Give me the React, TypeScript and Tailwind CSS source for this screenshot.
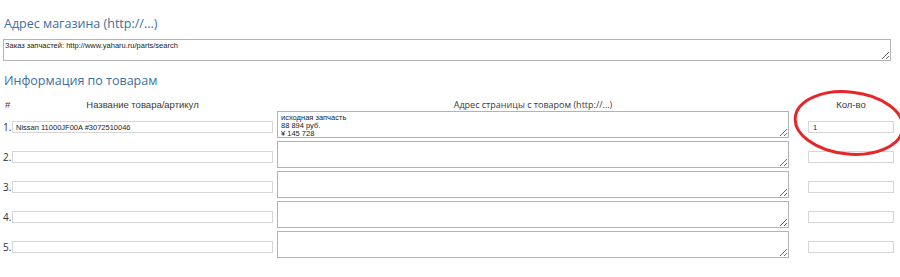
import React from "react";

function Row({ n, name, addr, qty }: { n: number; name?: string; addr?: string; qty?: string }) {
  return (
    <div className="flex items-start h-[27px]">
      <div className="w-[12px] pl-[3px] mt-[10px] h-[12px] leading-[12px] text-[10px] text-[#333] font-['Open_Sans',sans-serif]">
        {n}.
      </div>
      <input
        className="mt-[10px] w-[261px] h-[12px] border border-[#d6d6d6] px-[3px] text-[7.5px] leading-[10px] text-[#222] outline-none font-['Liberation_Sans',Arial,sans-serif]"
        defaultValue={name ?? ""}
      />
      <textarea
        className="ml-[4px] w-[512px] h-[27px] border border-[#b3b3b3] px-[3px] py-[2px] text-[7.5px] leading-[8px] text-[#222] overflow-hidden outline-none font-['Liberation_Sans',Arial,sans-serif]"
        defaultValue={addr ?? ""}
      />
      <input
        className="ml-[19px] mt-[10px] w-[86px] h-[12px] border border-[#d6d6d6] px-[4px] text-[7.5px] leading-[10px] text-[#222] outline-none font-['Liberation_Sans',Arial,sans-serif]"
        defaultValue={qty ?? ""}
      />
    </div>
  );
}

export default function App() {
  return (
    <div className="relative w-[900px] h-[277px] bg-white overflow-hidden">
      <div className="flex flex-col">
        <div className="mt-[16px] pl-[4px] h-[16px] leading-[16px] text-[12.5px] text-[#3d6f9f] font-['Open_Sans',sans-serif]">
          Адрес магазина (http://...)
        </div>
        <textarea
          className="mt-[7px] ml-[3px] w-[888px] h-[22px] border border-[#b3b3b3] pl-[1px] py-[2px] text-[7.5px] leading-[8px] text-[#222] overflow-hidden outline-none font-['Liberation_Sans',Arial,sans-serif]"
          defaultValue="Заказ запчастей: http://www.yaharu.ru/parts/search"
        />
        <div className="mt-[12px] pl-[4px] h-[16px] leading-[16px] text-[12.5px] text-[#3d6f9f] font-['Open_Sans',sans-serif]">
          Информация по товарам
        </div>
        <div className="mt-[10px] flex h-[12px] leading-[12px] text-[#3a3a3a]">
          <div className="w-[12px] pl-[5px] text-[9.5px] font-['Liberation_Sans',Arial,sans-serif]">#</div>
          <div className="w-[261px] text-center text-[9.5px] font-['Liberation_Sans',Arial,sans-serif]">Название товара/артикул</div>
          <div className="ml-[4px] w-[512px] text-center text-[9px] font-['Open_Sans',sans-serif]">Адрес страницы с товаром (http://...)</div>
          <div className="ml-[19px] w-[86px] text-center text-[9.5px] font-['Liberation_Sans',Arial,sans-serif]">Кол-во</div>
        </div>
        <div className="flex flex-col gap-[3px]">
          <Row n={1} name="Nissan 11000JF00A #3072510046" addr={"исходная запчасть\n88 894 руб.\n¥ 145 728"} qty="1" />
          <Row n={2} />
          <Row n={3} />
          <Row n={4} />
          <Row n={5} />
        </div>
      </div>
      <svg className="absolute left-[790px] top-[88px] w-[110px] h-[70px] pointer-events-none" viewBox="0 0 110 70">
        <ellipse cx="59" cy="35" rx="54" ry="31" fill="none" stroke="#e5262a" strokeWidth="3" transform="rotate(6 59 35)" />
      </svg>
    </div>
  );
}
